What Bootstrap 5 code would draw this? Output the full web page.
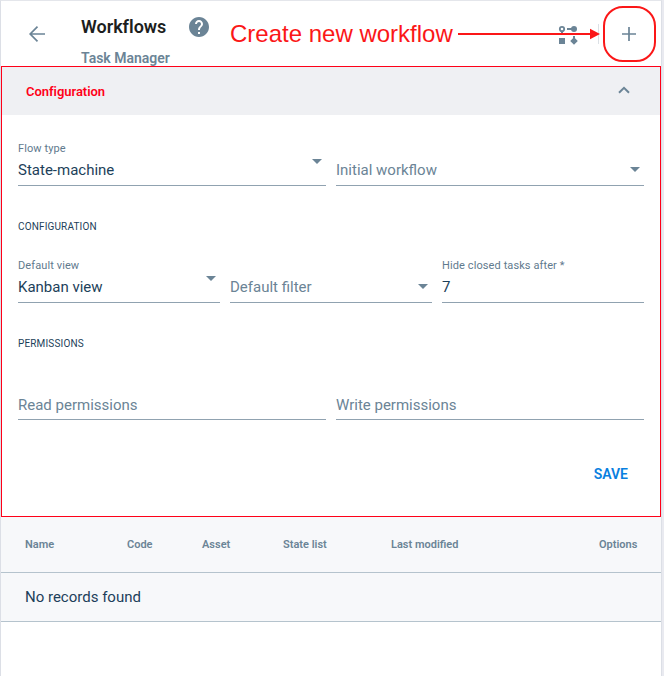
<!DOCTYPE html>
<html lang="en">
<head>
<meta charset="utf-8">
<meta name="viewport" content="width=device-width, initial-scale=1">
<title>Workflows</title>
<link href="https://cdn.jsdelivr.net/npm/bootstrap@5.3.0/dist/css/bootstrap.min.css" rel="stylesheet">
<style>
body { font-family: Roboto, sans-serif; background: #e9eaf0; color: #1d3f5a; overflow: hidden; }
svg { display: block; flex: none; }
.page { width: 662px; height: 676px; border: 1px solid #dcdfe6; border-bottom: 0; border-top-color: #e4e6eb; background: #fff; }
.topbar { height: 65px; color: #6b8496; padding-left: 26px; }
.titles { margin-left: 34px; width: 106px; padding-top: 14px; }
.titles h1 { font-size: 18px; line-height: 24px; font-weight: 600; letter-spacing: -.02px; color: #1c1e20; margin: 0; }
.titles div { font-size: 14px; line-height: 18px; font-weight: 600; margin-top: 10px; white-space: nowrap; }
.help-icon { margin-top: 14px; }
.plus-icon { margin: 22px 21px 0 0; }
.divider { width: 1px; height: 20px; background: #dce1e6; margin: 23px 19px 0 20px; }
.panel { width: 660px; height: 451px; border: 1px solid #ff0018; }
.panel-head { height: 48px; background: #eff0f3; padding: 0 29px 0 24px; }
.panel-head span { color: #ff0018; font-size: 13px; line-height: 18px; font-weight: 600; letter-spacing: -.04px; padding-top: 2px; }
.panel-body { padding: 25px 16px 0; }
.fields { gap: 10px; }
.field { flex: 1 1 0; height: 46px; border-bottom: 1px solid #90a2b0; }
.field label { display: block; height: 16px; font-size: 11px; line-height: 18px; letter-spacing: .1px; color: #5f7a8e; }
.value { font-size: 15px; line-height: 28px; }
.empty .value { color: #6b8496; }
.lowered .value { line-height: 30px; }
.caret { width: 10px; height: 5px; background: #6b8496; clip-path: polygon(0 0, 100% 0, 50% 100%); margin: 19px 4px 0 0; }
.empty .caret { margin-top: 27px; }
.section-title { font-size: 10px; line-height: 16px; letter-spacing: .15px; margin: 33px 0 22px; font-weight: 400; }
.save { color: #0880e0; font-size: 14px; line-height: 20px; font-weight: 600; padding: 8px 16px; margin-top: 36px; border: 0; }
.records { width: 660px; table-layout: fixed; border-collapse: separate; border-spacing: 0; background: #f7f8fa; margin: 0; }
.records th { height: 56px; font-size: 11px; font-weight: 600; color: #6b8496; padding: 2px 0 0; vertical-align: middle; border-bottom: 1px solid #b5c3cd; }
.records td { height: 49px; font-size: 15px; padding: 0 0 0 24px; vertical-align: middle; border-bottom: 1px solid #b5c3cd; }
.records th:first-child { padding-left: 24px; }
.note { left: 230px; top: 17px; font: 24px/34px "Liberation Sans", sans-serif; color: #fb1718; white-space: nowrap; }
.note-lines { left: 0; top: 0; pointer-events: none; }
</style>
<script src="https://cdn.jsdelivr.net/npm/bootstrap@5.3.0/dist/js/bootstrap.bundle.min.js"></script>
</head>
<body>
<main class="page">
  <header class="topbar d-flex align-items-start">
    <svg class="mt-4" width="20" height="18" viewBox="0 0 20 18" fill="none" stroke="currentColor" stroke-width="1.7"><path d="M18 9H3.500M10.500 1.700L3.200 9l7.300 7.300"/></svg>
    <div class="titles"><h1>Workflows</h1><div>Task Manager</div></div>
    <svg class="help-icon" width="24" height="24" viewBox="0 0 24 24" fill="currentColor"><path d="M12 2C6.480 2 2 6.480 2 12s4.480 10 10 10 10-4.480 10-10S17.520 2 12 2zm1 17h-2v-2h2v2zm2.070-7.750l-.9.920C13.450 12.900 13 13.500 13 15h-2v-.5c0-1.100.45-2.100 1.170-2.830l1.240-1.260c.37-.36.590-.86.590-1.410 0-1.100-.9-2-2-2s-2 .9-2 2H8c0-2.210 1.790-4 4-4s4 1.790 4 4c0 .88-.36 1.680-.93 2.250z"/></svg>
    <svg class="ms-auto mt-4" width="20" height="20" viewBox="0 0 20 20" fill="currentColor"><circle cx="4" cy="4" r="2.200" fill="none" stroke="currentColor" stroke-width="1.800"/><path d="M3 6h2v3H3zM9 3h5v2H9z"/><circle cx="16" cy="4" r="3"/><path d="M1 13h6v6H1zM15 11h2v3h-2zM16 12.200l3.800 3.800-3.800 3.800-3.800-3.800z"/></svg>
    <div class="divider"></div>
    <svg class="plus-icon" width="22" height="22" viewBox="0 0 22 22" fill="none" stroke="currentColor" stroke-width="1.700"><path d="M11 4v14M4 11h14"/></svg>
  </header>

  <section class="panel">
    <div class="panel-head d-flex align-items-center justify-content-between">
      <span>Configuration</span>
      <svg width="14" height="14" viewBox="0 0 14 14" fill="none" stroke="#6b8496" stroke-width="2"><path d="M2 8.800l5-5 5 5"/></svg>
    </div>
    <div class="panel-body">
      <div class="fields d-flex">
        <div class="field d-flex justify-content-between"><div><label>Flow type</label><div class="value">State-machine</div></div><i class="caret"></i></div>
        <div class="field empty d-flex justify-content-between"><div><label></label><div class="value">Initial workflow</div></div><i class="caret"></i></div>
      </div>
      <h2 class="section-title">CONFIGURATION</h2>
      <div class="fields d-flex">
        <div class="field d-flex justify-content-between"><div><label>Default view</label><div class="value">Kanban view</div></div><i class="caret"></i></div>
        <div class="field empty d-flex justify-content-between"><div><label></label><div class="value">Default filter</div></div><i class="caret"></i></div>
        <div class="field"><label>Hide closed tasks after *</label><div class="value">7</div></div>
      </div>
      <h2 class="section-title">PERMISSIONS</h2>
      <div class="fields d-flex lowered">
        <div class="field empty"><label></label><div class="value">Read permissions</div></div>
        <div class="field empty"><label></label><div class="value">Write permissions</div></div>
      </div>
      <div class="d-flex justify-content-end"><button class="btn save" type="button">SAVE</button></div>
    </div>
  </section>

  <table class="records">
    <colgroup><col style="width:126px"><col style="width:75px"><col style="width:81px"><col style="width:108px"><col style="width:208px"><col></colgroup>
    <thead><tr><th>Name</th><th>Code</th><th>Asset</th><th>State list</th><th>Last modified</th><th>Options</th></tr></thead>
    <tbody><tr><td colspan="6">No records found</td></tr></tbody>
  </table>
</main>

<div class="note position-absolute">Create new workflow</div>
<svg class="note-lines position-absolute" width="664" height="68" viewBox="0 0 664 68">
  <path d="M458 34h134" stroke="#fb1718" stroke-width="2"/>
  <path d="M590 28.800L600 34l-10 5.200z" fill="#fb1718"/>
  <rect x="604" y="7" width="51" height="54" rx="19" fill="none" stroke="#fb1718" stroke-width="2"/>
</svg>
</body>
</html>
